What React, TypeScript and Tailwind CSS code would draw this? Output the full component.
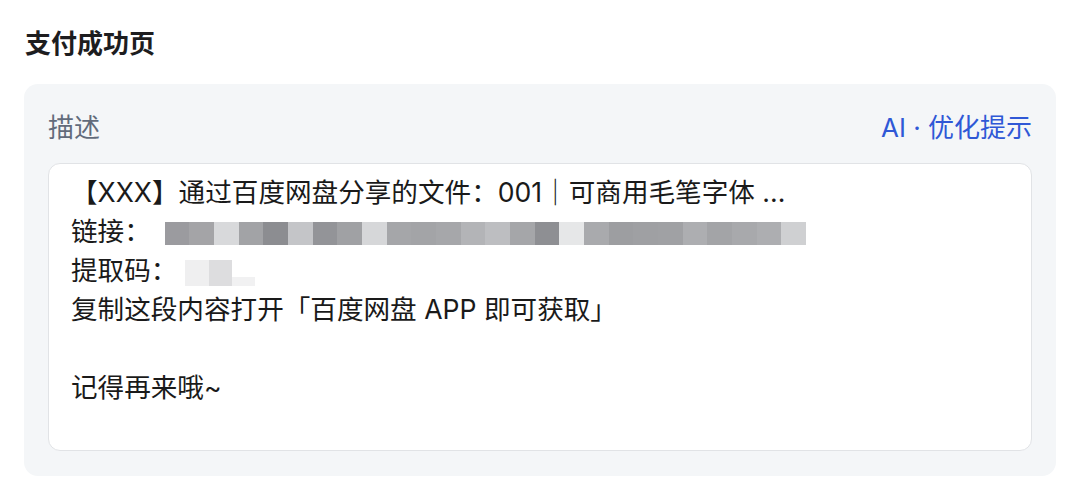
const linkCells = [
  "#9b9b9f", "#a4a4a7", "#d8d9db", "#a2a3a6", "#8c8d91", "#c4c5c8", "#939498",
  "#a0a1a4", "#d6d7d9", "#a5a6a9", "#a3a4a7", "#a6a7aa", "#b3b4b7", "#bdbec1",
  "#a5a6a9", "#8e8f93", "#e6e7e8", "#a9aaad", "#9d9ea1", "#9fa0a3", "#a0a1a4",
  "#adaeb1", "#a3a4a7", "#a8a9ac", "#adaeb1", "#cfd0d2",
];

// Pixelated placeholder standing in for the hidden share link
const MaskedLink = () => (
  <span className="ml-[14px] inline-flex h-[23px] w-[641px] align-middle blur-[0.6px]">
    {linkCells.map((c, i) => (
      <span key={i} className="h-full flex-1" style={{ backgroundColor: c }} />
    ))}
  </span>
);

const MaskedCode = () => (
  <span className="ml-[8px] inline-flex h-[26px] w-[72px] align-middle blur-[0.6px]">
    <span className="h-[26px] w-[24px] bg-[#efeff0]" />
    <span className="h-[26px] w-[23px] bg-[#dddddf]" />
    <span className="mt-[17px] h-[9px] w-[23px] bg-[#f1f1f2]" />
  </span>
);

export default function App() {
  return (
    <div
      className="h-[497px] w-[1080px] bg-white px-6 pt-[26px]"
      style={{ fontFamily: 'Inter, "Noto Sans CJK SC", sans-serif' }}
    >
      <h1 className="pl-px text-[26px] font-bold leading-[36px] text-[#1d1d1f]">支付成功页</h1>

      <section className="mt-[22px] rounded-[14px] bg-[#f4f6f8] px-6 pb-[25px] pt-[28px]">
        <div className="mb-[19px] flex items-center justify-between text-[26px] leading-[32px]">
          <span className="text-[#626b7b]">描述</span>
          <span className="text-[#2f58d6]">AI · 优化提示</span>
        </div>

        <div className="h-[288px] rounded-[12px] border border-[#e1e3e6] bg-white pl-[22px] pr-6 pt-[9px] text-[26.6px] leading-[39px] text-[#1a1a1a]">
          <div>【XXX】通过百度网盘分享的文件：001｜可商用毛笔字体 ...</div>
          <div>
            链接：
            <MaskedLink />
          </div>
          <div>
            提取码：<MaskedCode />
          </div>
          <div>复制这段内容打开「百度网盘 APP 即可获取」</div>
          <div className="h-[39px]" />
          <div>记得再来哦~</div>
        </div>
      </section>
    </div>
  );
}
